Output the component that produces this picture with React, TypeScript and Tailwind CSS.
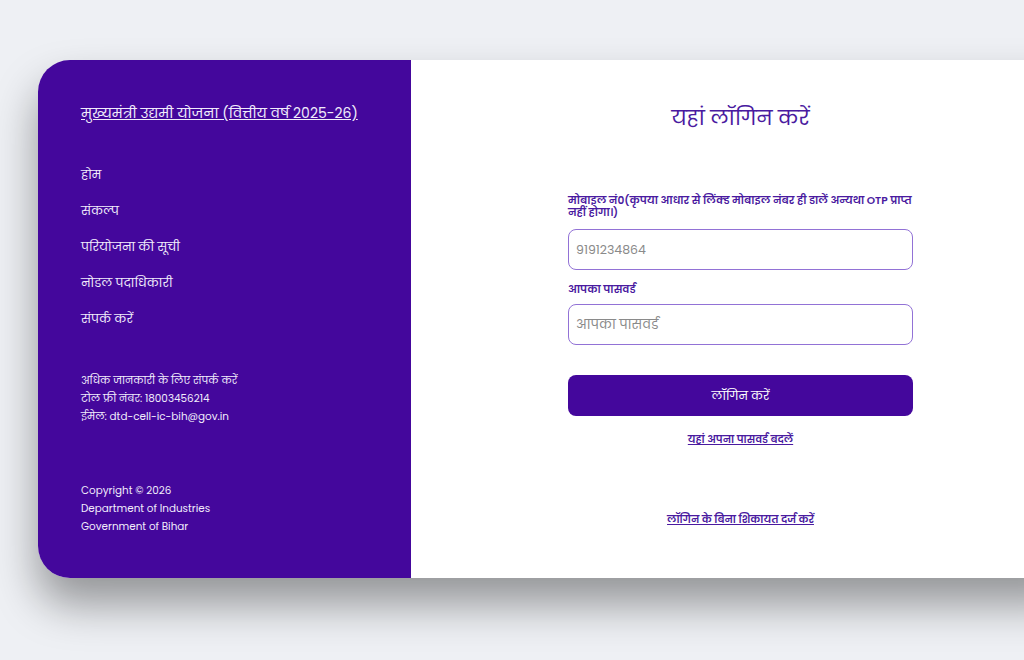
import React from "react";

const navItems = ["होम", "संकल्प", "परियोजना की सूची", "नोडल पदाधिकारी", "संपर्क करें"];

const App: React.FC = () => {
  return (
    <div
      className="w-[1024px] h-[660px] overflow-hidden bg-[#eef0f4] pt-[60px] pl-[38px]"
      style={{ fontFamily: '"Poppins", "Noto Sans", "Noto Sans Devanagari", "Lato", sans-serif' }}
    >
      <div className="flex w-[1032px] h-[518px] rounded-l-[32px] bg-white shadow-[0_26px_44px_rgba(0,0,0,0.38)]">
        {/* left panel */}
        <div className="w-[373px] shrink-0 rounded-l-[32px] bg-[#44079c] text-[#f1ecfb] pl-[43px] pt-[42px] flex flex-col">
          <a className="text-[14px] underline leading-[22px]">मुख्यमंत्री उद्यमी योजना (वित्तीय वर्ष 2025-26)</a>

          <ul className="mt-[42px] flex flex-col gap-[18px]">
            {navItems.map((item) => (
              <li key={item} className="text-[12.2px] leading-[18px]">
                {item}
              </li>
            ))}
          </ul>

          <div className="mt-[44px] text-[10.4px] leading-[18px]">
            <p>अधिक जानकारी के लिए संपर्क करें</p>
            <p>टोल फ्री नंबर: 18003456214</p>
            <p>ईमेल: dtd-cell-ic-bih@gov.in</p>
          </div>

          <div className="mt-[56px] text-[10.4px] leading-[18px]">
            <p>Copyright © 2026</p>
            <p>Department of Industries</p>
            <p>Government of Bihar</p>
          </div>
        </div>

        {/* right panel */}
        <div className="flex-1 flex flex-col items-center pt-[42px]">
          <h1 className="text-[20.6px] leading-[32px] text-[#4a1aa0]">यहां लॉगिन करें</h1>

          <form className="w-[345px] mt-[61px] flex flex-col">
            <label className="text-[10.6px] font-semibold leading-[12px] text-[#4a1aa0]">
              मोबाइल नं0(कृपया आधार से लिंक्ड मोबाइल नंबर ही डालें अन्यथा OTP प्राप्त नहीं होगा।)
            </label>
            <input
              className="mt-[10px] h-[41px] rounded-[8px] border border-[#9272d6] px-[7px] text-[12.5px] text-gray-700 placeholder:text-[#8a8a8a] outline-none"
              placeholder="9191234864"
            />

            <label className="mt-[13px] text-[10.6px] font-semibold leading-[14px] text-[#4a1aa0]">
              आपका पासवर्ड
            </label>
            <input
              type="password"
              className="mt-[7px] h-[41px] rounded-[8px] border border-[#9272d6] px-[7px] text-[13px] text-gray-700 placeholder:text-[#8a8a8a] outline-none"
              placeholder="आपका पासवर्ड"
            />

            <button
              type="button"
              className="mt-[30px] h-[41px] rounded-[8px] bg-[#44079c] text-white text-[12px]"
            >
              लॉगिन करें
            </button>

            <a className="mt-[16px] self-center text-[10.3px] font-semibold leading-[16px] underline text-[#4a1aa0]">
              यहां अपना पासवर्ड बदलें
            </a>

            <a className="mt-[64px] self-center text-[10.3px] font-semibold leading-[16px] underline text-[#4a1aa0]">
              लॉगिन के बिना शिकायत दर्ज करें
            </a>
          </form>
        </div>
      </div>
    </div>
  );
};

export default App;
